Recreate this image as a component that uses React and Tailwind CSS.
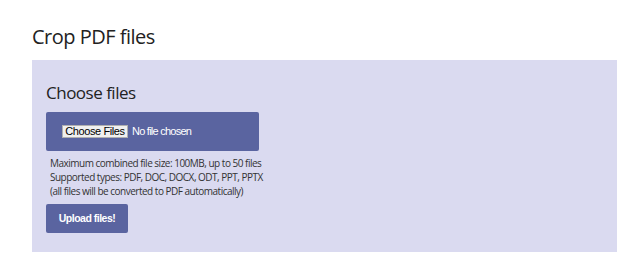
export default function App() {
  return (
    <div className="w-[640px] h-[279px] bg-white pt-[23px] pl-[32px] font-['Open_Sans',sans-serif]">
      <h1 className="text-[20px] leading-[28px] tracking-[-0.5px] text-[#222] font-normal">
        Crop PDF files
      </h1>
      <div className="mt-[9px] w-[585px] h-[192px] bg-[#dadaf0] pt-[20px] pl-[14px]">
        <h2 className="text-[17px] leading-[26px] tracking-[-0.5px] text-[#222] font-normal">
          Choose files
        </h2>
        <div className="mt-[6px] w-[213px] h-[39px] rounded-[2px] bg-[#5a64a0] flex items-center pl-[16px] font-['Liberation_Sans',Arial,sans-serif]">
          <span className="h-[13px] w-[66px] bg-[#f0f0f0] border border-[#b0b0b0] text-[11px] leading-[11px] tracking-[-0.4px] text-black flex items-center justify-center whitespace-nowrap">
            Choose Files
          </span>
          <span className="ml-[4px] text-[11px] tracking-[-0.75px] text-white whitespace-nowrap">No file chosen</span>
        </div>
        <div className="mt-[5px] pl-[4px] text-[10px] leading-[14px] tracking-[-0.5px] text-[#333]">
          <div>Maximum combined file size: 100MB, up to 50 files</div>
          <div>Supported types: PDF, DOC, DOCX, ODT, PPT, PPTX</div>
          <div>(all files will be converted to PDF automatically)</div>
        </div>
        <button className="mt-[6px] w-[82px] h-[29px] rounded-[2px] bg-[#5a64a0] text-white text-[10.5px] tracking-[-0.5px] font-bold font-['Liberation_Sans',Arial,sans-serif]">
          Upload files!
        </button>
      </div>
    </div>
  );
}
